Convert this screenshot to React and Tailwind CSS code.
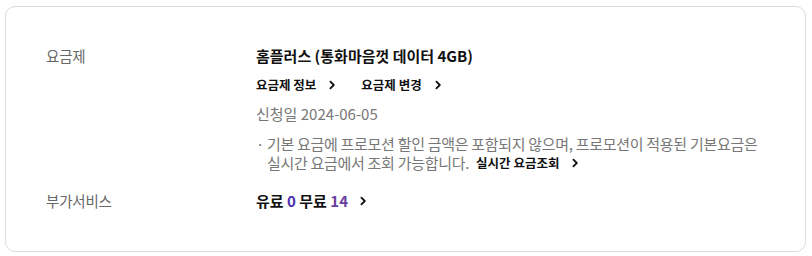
import React from 'react';

const Chevron = ({ className = '' }) => (
  <svg className={className} width="10" height="10" viewBox="0 0 10 10" fill="none">
    <path d="M3.4 1.6 6.8 5 3.4 8.4" stroke="currentColor" strokeWidth="1.8" strokeLinecap="round" strokeLinejoin="round" />
  </svg>
);

export default function App() {
  return (
    <div className="bg-white p-[6px] pl-[5px] font-['Noto_Sans_CJK_KR','Noto_Sans',sans-serif]">
      <div className="rounded-[10px] border border-[#dcdcdc] px-10 pt-[38px] pb-[39px]">
        {/* 요금제 */}
        <div className="flex">
          <div className="w-[210px] shrink-0 text-[14.5px] leading-[22px] tracking-[-0.2px] text-[#666]">요금제</div>
          <div className="flex-1">
            <div className="text-[15px] leading-[22px] font-semibold text-[#111]">홈플러스 (통화마음껏 데이터 4GB)</div>
            <div className="mt-[8px] flex items-center gap-[24px] text-[12.5px] leading-[20px] font-semibold text-[#111]">
              <a className="flex items-center gap-[11px]">요금제 정보 <Chevron /></a>
              <a className="flex items-center gap-[11px]">요금제 변경 <Chevron /></a>
            </div>
            <div className="mt-[8px] text-[15px] leading-[22px] text-[#777]">신청일 2024-06-05</div>
            <div className="mt-[9px] flex text-[15px] leading-[19px] tracking-[-0.3px] text-[#777]">
              <span className="w-[11px] shrink-0">·</span>
              <p>
                기본 요금에 프로모션 할인 금액은 포함되지 않으며, 프로모션이 적용된 기본요금은
                <br />
                실시간 요금에서 조회 가능합니다.
                <a className="ml-[7px] inline-flex items-center gap-[11px] align-top text-[12.5px] font-semibold tracking-normal text-[#111]">
                  실시간 요금조회 <Chevron />
                </a>
              </p>
            </div>
          </div>
        </div>

        {/* 부가서비스 */}
        <div className="mt-[18px] flex">
          <div className="w-[210px] shrink-0 text-[14.5px] leading-[22px] tracking-[-0.2px] text-[#666]">부가서비스</div>
          <div className="flex items-center gap-[10px] text-[15px] leading-[22px] font-semibold text-[#111]">
            <span>
              유료 <span className="text-[#4b30b0]">0</span> 무료 <span className="text-[#6b3fa0]">14</span>
            </span>
            <Chevron />
          </div>
        </div>
      </div>
    </div>
  );
}
